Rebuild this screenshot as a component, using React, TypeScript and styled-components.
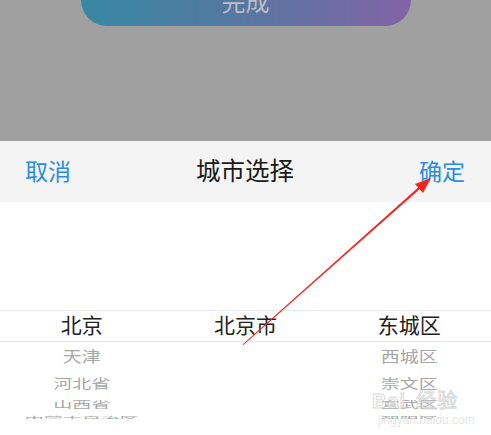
import React from 'react'
import styled, { createGlobalStyle } from 'styled-components'

const GlobalStyle = createGlobalStyle`
  html, body {
    margin: 0;
    padding: 0;
    background: #ffffff;
  }
  body {
    font-family: "Noto Sans CJK SC", "Noto Sans", sans-serif;
  }
`

const Screen = styled.div`
  position: relative;
  width: 491px;
  height: 435px;
  overflow: hidden;
  background: #ffffff;
  display: flex;
  flex-direction: column;
`

const Mask = styled.div`
  height: 141px;
  background: #a0a0a0;
  display: flex;
  flex-direction: column;
  align-items: center;
`

const DoneButton = styled.div`
  width: 330px;
  height: 52px;
  margin-top: -26px;
  border-radius: 26px;
  background: linear-gradient(90deg, #3888a3 0%, #5478a0 45%, #8264a6 100%);
  color: #b9bccb;
  font-size: 24px;
  display: flex;
  align-items: center;
  justify-content: center;
`

const Toolbar = styled.div`
  height: 61px;
  background: #f4f4f4;
  display: flex;
  align-items: center;
  justify-content: space-between;
  padding: 0 26px 0 25px;
`

const ToolButton = styled.span`
  font-size: 23px;
  color: #2a8de2;
  line-height: 1;
  padding-bottom: 2px;
`

const Title = styled.span`
  font-size: 24.5px;
  color: #1a1a1a;
  line-height: 1;
  padding-bottom: 2px;
`

const Picker = styled.div`
  height: 217px;
  overflow: hidden;
  display: grid;
  grid-template-columns: repeat(3, 1fr);
  align-content: start;
  padding-top: 108px;
  box-sizing: border-box;
  position: relative;
`

const Column = styled.div`
  display: flex;
  flex-direction: column;
  align-items: center;
`

const SelectedBand = styled.div`
  position: absolute;
  left: 0;
  right: 0;
  top: 108px;
  height: 30px;
  border-top: 1px solid #ececec;
  border-bottom: 1px solid #ececec;
  pointer-events: none;
`

const Selected = styled.div`
  height: 32px;
  padding-bottom: 5px;
  box-sizing: border-box;
  display: flex;
  align-items: center;
  font-size: 21px;
  color: #222222;
`

const Option = styled.div<{ $h: number; $scale: number }>`
  height: ${(p) => p.$h}px;
  display: flex;
  align-items: center;
  font-size: 19px;
  color: #a6a6a6;
  white-space: nowrap;
  transform: translateY(-2px) scaleY(${(p) => p.$scale});
`

const Watermark = styled.div`
  position: absolute;
  left: 372px;
  top: 390px;
  display: flex;
  flex-direction: column;
  align-items: flex-start;
  pointer-events: none;
  .brand {
    font-family: "Liberation Sans", sans-serif;
    font-weight: bold;
    font-size: 20px;
    line-height: 20px;
    color: rgba(255, 255, 255, 0.5);
    -webkit-text-stroke: 1px rgba(200, 200, 200, 0.7);
    letter-spacing: 1px;
  }
  .brand span {
    font-family: "Noto Sans CJK SC", sans-serif;
    font-weight: normal;
    margin-left: 10px;
  }
  .site {
    font-family: "Liberation Sans", sans-serif;
    font-size: 12px;
    line-height: 14px;
    margin-left: 6px;
    margin-top: 2px;
    color: rgba(210, 210, 210, 0.6);
  }
`

const Arrow = styled.svg`
  position: absolute;
  left: 0;
  top: 0;
  pointer-events: none;
`

const rows = [
  { h: 30, scale: 0.8 },
  { h: 24, scale: 0.66 },
  { h: 18, scale: 0.5 },
  { h: 12, scale: 0.32 },
]

const columns = [
  { selected: '北京', options: ['天津', '河北省', '山西省', '内蒙古自治区'] },
  { selected: '北京市', options: [] as string[] },
  { selected: '东城区', options: ['西城区', '崇文区', '宣武区', '朝阳区'] },
]

const App: React.FC = () => {
  return (
    <>
      <GlobalStyle />
      <Screen>
        <Mask>
          <DoneButton>完成</DoneButton>
        </Mask>
        <Toolbar>
          <ToolButton>取消</ToolButton>
          <Title>城市选择</Title>
          <ToolButton>确定</ToolButton>
        </Toolbar>
        <Picker>
          <SelectedBand />
          {columns.map((col) => (
            <Column key={col.selected}>
              <Selected>{col.selected}</Selected>
              {col.options.map((name, i) => (
                <Option key={name} $h={rows[i].h} $scale={rows[i].scale}>
                  {name}
                </Option>
              ))}
            </Column>
          ))}
        </Picker>
        <Watermark>
          <div className="brand">
            Bai<span>经验</span>
          </div>
          <div className="site">jingyan.baidu.com</div>
        </Watermark>
        <Arrow width="491" height="435" viewBox="0 0 491 435">
          <polygon
            points="242.6,344.5 243.4,345 419.6,189.2 423,193.1 431,178 415,184.1 418.2,187.6"
            fill="#f2261f"
          />
        </Arrow>
      </Screen>
    </>
  )
}

export default App
